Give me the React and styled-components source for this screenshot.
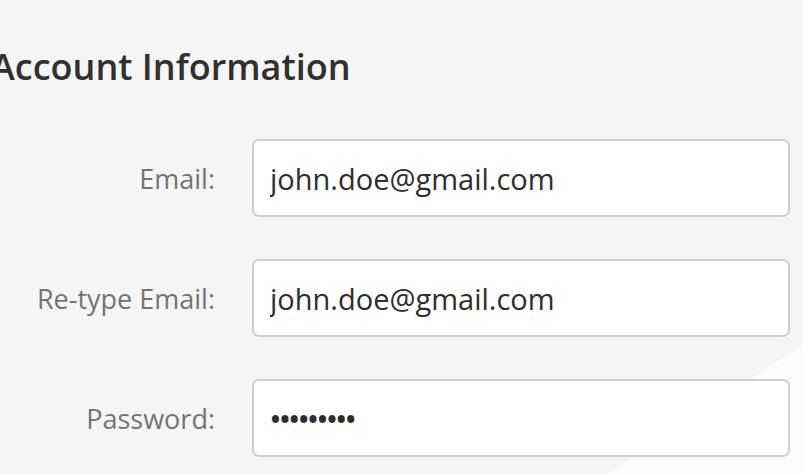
import React from "react";
import styled, { createGlobalStyle } from "styled-components";

const GlobalStyle = createGlobalStyle`
  html, body {
    margin: 0;
    padding: 0;
  }
  body {
    font-family: "Open Sans", "Noto Sans", "Liberation Sans", sans-serif;
    overflow: hidden;
  }
`;

const Page = styled.div`
  box-sizing: border-box;
  width: 100%;
  min-height: 100vh;
  padding: 49px 13px 0 0;
  background: linear-gradient(146.7deg, #f5f5f5 87.1%, #fbfbfb 87.1%);
  overflow: hidden;
`;

const Title = styled.h1`
  margin: 0 0 54px -9px;
  font-size: 36px;
  line-height: 1;
  font-weight: 600;
  color: #303030;
  white-space: nowrap;
`;

const Form = styled.form`
  display: flex;
  flex-direction: column;
  gap: 42px;
  margin: 0;
`;

const Row = styled.div`
  display: grid;
  grid-template-columns: 215px 1fr;
  column-gap: 37px;
  align-items: center;
`;

const Label = styled.label`
  text-align: right;
  font-size: 27px;
  line-height: 1;
  color: #747474;
  white-space: nowrap;
`;

const Input = styled.input`
  box-sizing: border-box;
  width: 100%;
  height: 78px;
  padding: 0 16px;
  border: 2px solid #cfcfcf;
  border-radius: 7px;
  background: #ffffff;
  font-family: "Open Sans", "Noto Sans", "Liberation Sans", sans-serif;
  font-size: 29px;
  font-weight: ${(p) => (p.type === "password" ? 600 : 400)};
  letter-spacing: ${(p) => (p.type === "password" ? "-1.5px" : "0")};
  color: #2e2e2e;
  outline: none;
`;

const fields = [
  { id: "email", label: "Email:", type: "text", value: "john.doe@gmail.com" },
  { id: "email2", label: "Re-type Email:", type: "text", value: "john.doe@gmail.com" },
  { id: "password", label: "Password:", type: "password", value: "123456789" },
];

export default function App() {
  return (
    <>
      <GlobalStyle />
      <Page>
        <Title>Account Information</Title>
        <Form onSubmit={(e) => e.preventDefault()}>
          {fields.map((f) => (
            <Row key={f.id}>
              <Label htmlFor={f.id}>{f.label}</Label>
              <Input id={f.id} type={f.type} value={f.value} readOnly />
            </Row>
          ))}
        </Form>
      </Page>
    </>
  );
}
